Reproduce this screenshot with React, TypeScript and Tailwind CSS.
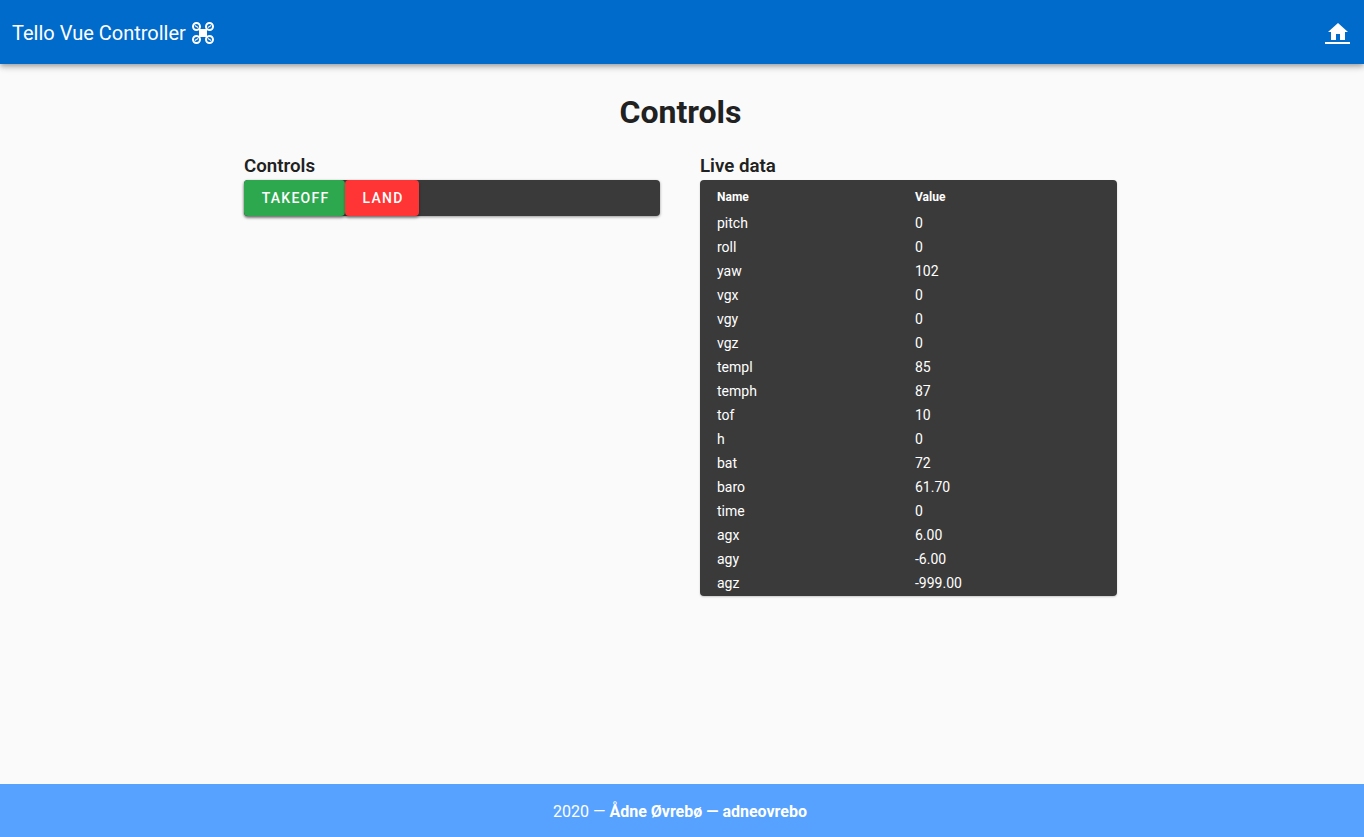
const rows = [
  ["pitch", "0"],
  ["roll", "0"],
  ["yaw", "102"],
  ["vgx", "0"],
  ["vgy", "0"],
  ["vgz", "0"],
  ["templ", "85"],
  ["temph", "87"],
  ["tof", "10"],
  ["h", "0"],
  ["bat", "72"],
  ["baro", "61.70"],
  ["time", "0"],
  ["agx", "6.00"],
  ["agy", "-6.00"],
  ["agz", "-999.00"],
];

function QuadcopterIcon() {
  return (
    <svg viewBox="0 0 24 24" className="h-6 w-6 fill-white" aria-hidden>
      <path d="M5.5,1C8,1 10,3 10,5.5C10,6.38 9.75,7.2 9.31,7.9L9.41,8H14.59L14.69,7.9C14.25,7.2 14,6.38 14,5.5C14,3 16,1 18.5,1C21,1 23,3 23,5.5C23,8 21,10 18.5,10C17.62,10 16.8,9.75 16.1,9.31L16,9.41V14.59L16.1,14.69C16.8,14.25 17.62,14 18.5,14C21,14 23,16 23,18.5C23,21 21,23 18.5,23C16,23 14,21 14,18.5C14,17.62 14.25,16.8 14.69,16.1L14.59,16H9.41L9.31,16.1C9.75,16.8 10,17.62 10,18.5C10,21 8,23 5.5,23C3,23 1,21 1,18.5C1,16 3,14 5.5,14C6.38,14 7.2,14.25 7.9,14.69L8,14.59V9.41L7.9,9.31C7.2,9.75 6.38,10 5.5,10C3,10 1,8 1,5.5C1,3 3,1 5.5,1M5.5,3A2.5,2.5 0 0,0 3,5.5A2.5,2.5 0 0,0 5.5,8A2.5,2.5 0 0,0 8,5.5A2.5,2.5 0 0,0 5.5,3M5.5,16A2.5,2.5 0 0,0 3,18.5A2.5,2.5 0 0,0 5.5,21A2.5,2.5 0 0,0 8,18.5A2.5,2.5 0 0,0 5.5,16M18.5,3A2.5,2.5 0 0,0 16,5.5A2.5,2.5 0 0,0 18.5,8A2.5,2.5 0 0,0 21,5.5A2.5,2.5 0 0,0 18.5,3M18.5,16A2.5,2.5 0 0,0 16,18.5A2.5,2.5 0 0,0 18.5,21A2.5,2.5 0 0,0 21,18.5A2.5,2.5 0 0,0 18.5,16Z" />
      <rect x="8" y="8" width="8" height="8" />
      <rect x="3.6" y="5" width="3.8" height="1" transform="rotate(30 5.5 5.5)" />
      <rect x="16.6" y="5" width="3.8" height="1" transform="rotate(-30 18.5 5.5)" />
      <rect x="3.6" y="18" width="3.8" height="1" transform="rotate(-30 5.5 18.5)" />
      <rect x="16.6" y="18" width="3.8" height="1" transform="rotate(30 18.5 18.5)" />
    </svg>
  );
}

function HomeLink() {
  return (
    <a className="flex w-[25px] flex-col items-end" href="#">
      <svg viewBox="0 0 24 24" className="h-6 w-6 fill-white" aria-hidden>
        <path d="M10,20V14H14V20H19V12H22L12,3L2,12H5V20H10Z" />
      </svg>
      <span className="-mt-[2px] h-[2px] w-full bg-white" />
    </a>
  );
}

export default function App() {
  return (
    <div className="flex min-h-[837px] flex-col bg-[#fafafa] font-['Roboto',sans-serif] text-[#212121]">
      <header className="z-10 flex h-16 items-center justify-between bg-[#006bcb] pl-3 pr-[14px] text-white shadow-[0_2px_4px_-1px_rgba(0,0,0,0.2),0_4px_5px_0_rgba(0,0,0,0.14),0_1px_10px_0_rgba(0,0,0,0.12)]">
        <div className="flex items-center gap-[5px] pt-[2px] text-xl">
          <span>Tello Vue Controller</span>
          <QuadcopterIcon />
        </div>
        <HomeLink />
      </header>

      <main className="flex-1 pr-[3px]">
        <h1 className="mt-7 text-center text-[32px] font-bold leading-10">Controls</h1>
        <div className="mx-auto mt-5 grid w-[873px] grid-cols-[416px_417px] gap-10">
          <section>
            <h2 className="text-[18.72px] font-semibold leading-7">Controls</h2>
            <div className="flex rounded bg-[#3a3a3a] shadow-[0_1px_3px_rgba(0,0,0,0.4)]">
              <button className="flex h-9 w-[101px] items-center justify-center rounded bg-[#2ea84f] pl-[2px] text-sm font-medium tracking-[1.25px] text-white shadow-[0_2px_3px_rgba(0,0,0,0.35)]">
                TAKEOFF
              </button>
              <button className="flex h-9 w-[74px] items-center justify-center rounded bg-[#ff3535] pl-[2px] text-sm font-medium tracking-[1.25px] text-white shadow-[0_2px_3px_rgba(0,0,0,0.35)]">
                LAND
              </button>
            </div>
          </section>

          <section>
            <h2 className="text-[18.72px] font-semibold leading-7">Live data</h2>
            <div className="rounded bg-[#3a3a3a] pb-[1px] text-white shadow-[0_1px_2px_rgba(0,0,0,0.2)]">
              <div className="grid h-[31px] grid-cols-[198px_1fr] items-center pl-[17px] pr-4 pt-[2px] text-xs font-bold">
                <span>Name</span>
                <span>Value</span>
              </div>
              <div className="text-sm">
                {rows.map(([name, value]) => (
                  <div key={name} className="grid h-6 grid-cols-[198px_1fr] items-center pl-[17px] pr-4">
                    <span>{name}</span>
                    <span>{value}</span>
                  </div>
                ))}
              </div>
            </div>
          </section>
        </div>
      </main>

      <footer className="flex h-[53px] items-center justify-center bg-[#58a2ff] pr-1 pt-[2px] text-base text-white">
        <span>
          2020 — <strong className="font-bold">Ådne Øvrebø — adneovrebo</strong>
        </span>
      </footer>
    </div>
  );
}
